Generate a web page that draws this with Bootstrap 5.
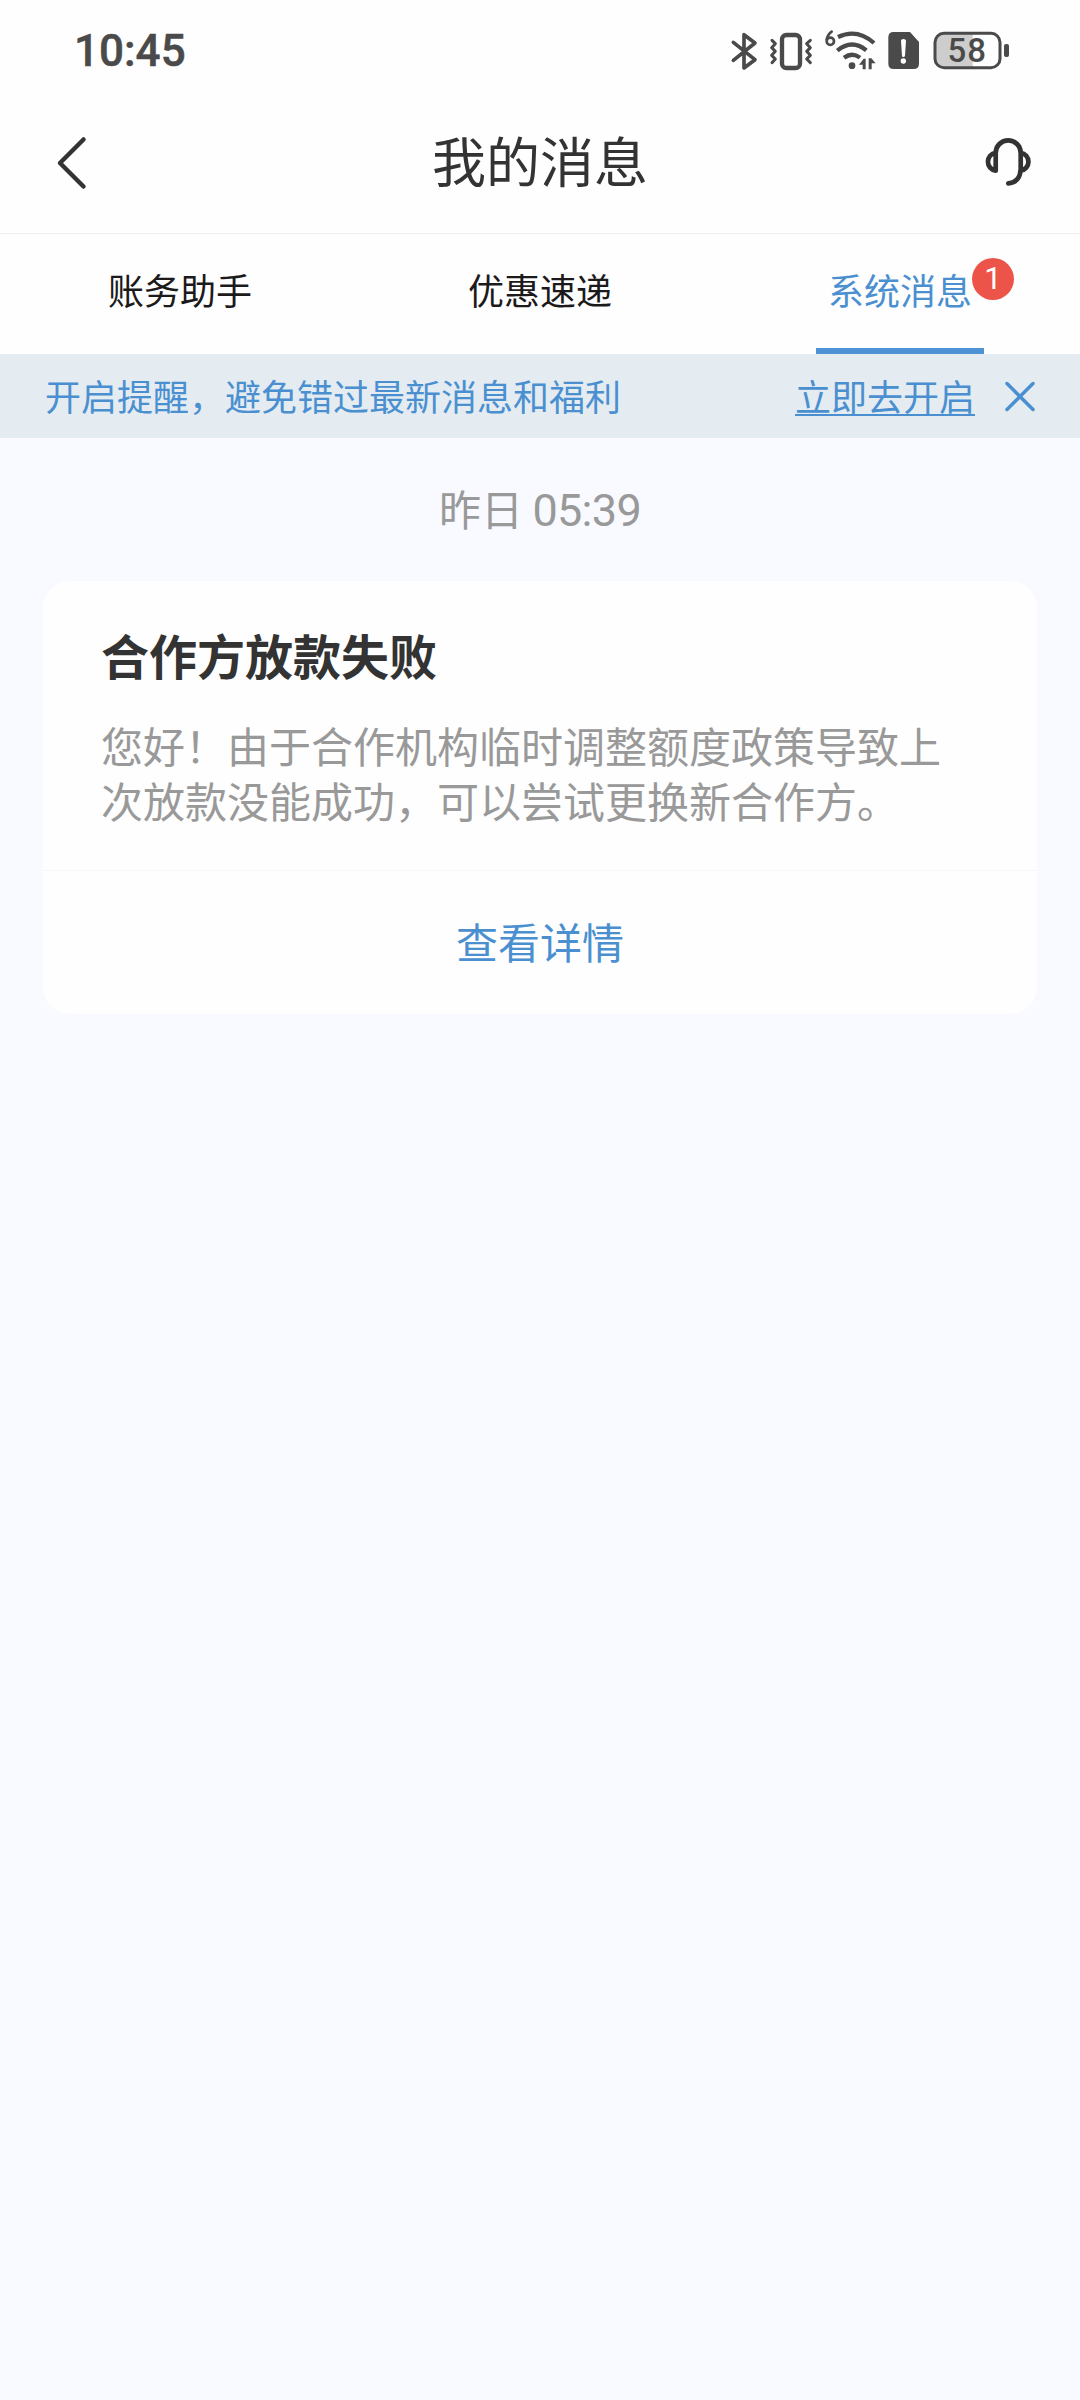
<!DOCTYPE html>
<html lang="zh-CN">
<head>
<meta charset="utf-8">
<meta name="viewport" content="width=device-width, initial-scale=1">
<title>我的消息</title>
<link href="https://cdn.jsdelivr.net/npm/bootstrap@5.3.0/dist/css/bootstrap.min.css" rel="stylesheet">
<style>
  body { font-family: "Noto Sans CJK SC", sans-serif; background: #f8faff; color: #333; min-height: 2400px; }
  .top-area { background: #fefefe; }
  .status-bar { height: 102px; padding: 0 70px 0 74px; color: #4a4a4a; }
  .clock { font: 500 44px/1 Roboto, sans-serif; -webkit-text-stroke: .5px #4a4a4a; }
  .app-header { height: 132px; padding: 0 45px 11px 45px; border-bottom: 1px solid #eee; }
  .app-title { font-size: 54px; line-height: 60px; padding-bottom: 4px; }
  .tab-row { height: 120px; }
  .tab-row .nav-link { height: 120px; padding: 0; color: #1c1a1a; font-size: 36px; line-height: 111px; border-radius: 0; }
  .tab-row .tab-label { display: inline-block; height: 120px; padding: 0 12px; border-bottom: 6px solid transparent; }
  .tab-row .active { color: #4a90d0; }
  .tab-row .active .tab-label { border-color: #4f92d6; }
  .count-dot { width: 42px; height: 42px; top: 24px; left: 156px; background: #ec5449; font: 400 31px/42px Roboto, sans-serif; }
  .notice { height: 84px; padding: 0 45px; background: #e4ebf1; color: #4a90d0; font-size: 36px; line-height: 48px; }
  .notice-text { padding-bottom: 3px; }
  .notice a { color: inherit; margin-right: 30px; text-decoration: underline; text-decoration-thickness: 2px; text-underline-offset: 3px; }
  .stamp { height: 103px; color: #999; font-size: 42px; line-height: 60px; padding-top: 40px; }
  .stamp-time { font-family: Roboto, sans-serif; font-size: 45px; letter-spacing: -.7px; }
  .msg-card { margin: 40px 43px 0; border: 0; border-radius: 27px; background: #fefefe; color: #333; }
  .msg-body { height: 289px; padding: 41px 58px 0 58px; }
  .msg-title { font-size: 48px; line-height: 64px; margin: 0 0 31px; font-weight: 700; }
  .msg-text { color: #999; font-size: 42px; line-height: 55px; margin: 0; }
  .msg-foot { height: 144px; border-top: 1px solid #f6f7f8; background: none; padding: 0 0 3px; border-radius: 0; }
  .msg-foot a { color: #4a90d0; font-size: 42px; line-height: 60px; }
</style>
<script src="https://cdn.jsdelivr.net/npm/bootstrap@5.3.0/dist/js/bootstrap.bundle.min.js"></script>
</head>
<body>
<div class="top-area">
  <div class="status-bar d-flex align-items-center justify-content-between">
    <span class="clock">10:45</span>
    <div class="d-flex">
      <!-- bluetooth -->
      <svg width="33" height="42" viewBox="60 60 99 126" fill="none" stroke="#4a4a4a" stroke-width="11" stroke-linejoin="round" stroke-linecap="round"><path d="M70 97 L135 149 L102 174 V74 L135 99 L70 151"/></svg>
      <!-- vibrate -->
      <svg width="54" height="42" viewBox="159 60 162 126" fill="none" stroke="#4a4a4a"><rect x="216" y="75" width="54" height="99" rx="13" stroke-width="13"/><path stroke-width="9" stroke-linejoin="round" stroke-linecap="round" d="M186 91 L196 101 L185 113 L196 124 L185 136 L196 147 L186 158 M301 91 L290 101 L301 113 L290 124 L301 136 L290 147 L301 158"/></svg>
      <!-- wifi 6 -->
      <svg width="65" height="42" viewBox="321 60 195 126" fill="none" stroke="#4a4a4a"><path stroke-width="8" stroke-linecap="round" d="M365 65 Q354 72 350 88"/><ellipse cx="361" cy="94" rx="11" ry="11" stroke-width="8"/><path stroke-width="13" d="M384 81 Q441 54 492 99 M382 122 Q425 86 469 121 M402 143 Q427 125 450 143"/><circle cx="426" cy="167" r="10" fill="#4a4a4a" stroke="none"/><path d="M447 164 L461 146 H467 V178 H458 V164Z M476 145 H484 L497 160 H485 V178 H476Z" fill="#4a4a4a" stroke="none"/></svg>
      <!-- sim alert -->
      <svg width="45" height="42" viewBox="516 60 135 126"><path fill="#4a4a4a" d="M551 66 H600 L627 96 V161 Q627 177 611 177 H551 Q535 177 535 161 V82 Q535 66 551 66Z"/><path fill="#fff" d="M573 92 Q573 87 580 87 Q588 87 588 92 L585 137 Q584 141 580 141 Q576 141 576 137Z"/><circle cx="580" cy="153" r="8" fill="#fff"/></svg>
      <!-- battery -->
      <svg width="83" height="42" viewBox="651 60 249 126"><path fill="#cdcdcd" d="M698 70 H788 V172 H698 Q676 172 676 150 V92 Q676 70 698 70Z"/><rect x="675" y="70" width="195" height="103" rx="27" fill="none" stroke="#4a4a4a" stroke-width="9"/><rect x="882" y="102" width="15" height="39" rx="6" fill="#4a4a4a"/><text x="772" y="157" text-anchor="middle" font-family="Roboto, sans-serif" font-size="99" font-weight="500" letter-spacing="3" fill="#4a4a4a">58</text></svg>
    </div>
  </div>
  <header class="app-header d-flex align-items-center justify-content-between">
    <svg width="63" height="60" viewBox="-9 0 63 60" fill="none" stroke="#333" stroke-width="4.5" stroke-linecap="round" stroke-linejoin="round"><path d="M29.500 7.500 L6 31 L29.500 54.500"/></svg>
    <h1 class="app-title m-0 fw-normal">我的消息</h1>
    <svg width="63" height="54" viewBox="-9 0 63 54" fill="none" stroke="#333" stroke-width="4.700" stroke-linecap="round" stroke-linejoin="round"><path d="M14.700 35.700 V18 A12.500 12.700 0 0 1 39.700 18 V34 Q39 47.500 27.300 48.300 M14.700 17.700 A9.100 9.100 0 0 0 14.700 35.700 M39.700 17.700 A9.100 9.100 0 0 1 39.700 35.700"/></svg>
  </header>
  <nav class="nav nav-fill tab-row">
    <a class="nav-link col-4" href="#"><span class="tab-label">账务助手</span></a>
    <a class="nav-link col-4" href="#"><span class="tab-label">优惠速递</span></a>
    <a class="nav-link col-4 active" href="#"><span class="tab-label position-relative">系统消息<span class="count-dot position-absolute rounded-circle text-white text-center">1</span></span></a>
  </nav>
</div>
<div class="notice d-flex align-items-center">
  <span class="notice-text me-auto">开启提醒，避免错过最新消息和福利</span>
  <a class="notice-text" href="#">立即去开启</a>
  <svg width="30" height="31" viewBox="0 0 30 31" fill="none" stroke="#4a90d0" stroke-width="3.500" stroke-linecap="round"><path d="M2 2.500 L28 28.500 M28 2.500 L2 28.500"/></svg>
</div>
<main>
  <div class="stamp text-center">昨日 <span class="stamp-time">05:39</span></div>
  <article class="card msg-card">
    <div class="card-body msg-body flex-grow-0">
      <h2 class="msg-title">合作方放款失败</h2>
      <p class="msg-text">您好！由于合作机构临时调整额度政策导致上次放款没能成功，可以尝试更换新合作方。</p>
    </div>
    <div class="card-footer msg-foot d-flex align-items-center justify-content-center">
      <a class="text-decoration-none" href="#">查看详情</a>
    </div>
  </article>
</main>
</body>
</html>
